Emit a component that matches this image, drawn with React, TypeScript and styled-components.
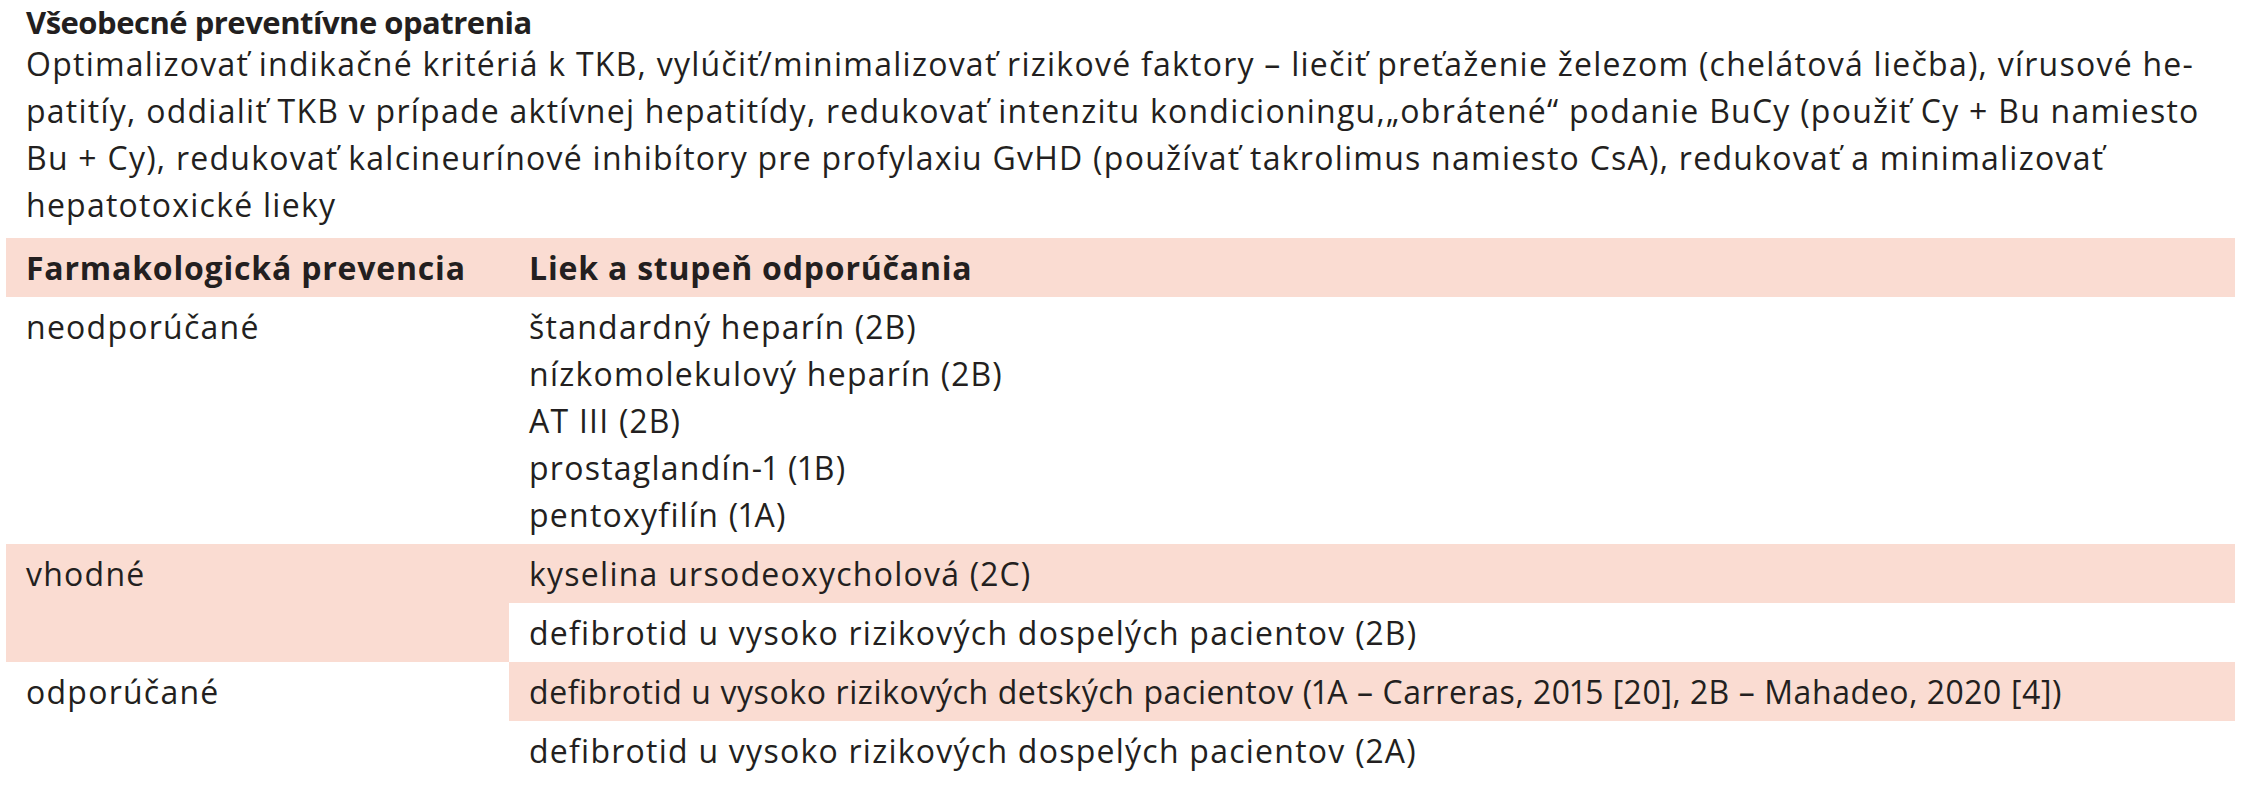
import React from "react";
import styled, { createGlobalStyle } from "styled-components";

const GlobalStyle = createGlobalStyle`
  html, body {
    margin: 0;
    padding: 0;
    background: #ffffff;
  }
  body {
    font-family: "Open Sans", "Noto Sans", "DejaVu Sans", sans-serif;
    color: #231f20;
  }
`;

const PINK = "#fadcd2";

const Page = styled.div`
  width: 2250px;
  height: 800px;
  box-sizing: border-box;
  padding: 4px 15px 0 6px;
  font-size: 32px;
  letter-spacing: 1.25px;
  font-variant-numeric: proportional-nums;
`;

const Intro = styled.section`
  padding: 0 20px 10px 20px;
`;

const Title = styled.h2`
  margin: 0;
  font-size: 31px;
  font-weight: 700;
  line-height: 36px;
  letter-spacing: -0.5px;
`;

const Paragraph = styled.p`
  margin: 0;
  font-size: 32px;
  font-weight: 400;
  line-height: 47px;
  white-space: nowrap;
`;

const Table = styled.div`
  display: grid;
  grid-template-columns: 503px 1fr;
`;

const Cell = styled.div<{ $pink?: boolean; $bold?: boolean; $span?: number; $tight?: boolean }>`
  box-sizing: border-box;
  padding: 6px 20px 6px 20px;
  line-height: 47px;
  background: ${(p) => (p.$pink ? PINK : "transparent")};
  font-weight: ${(p) => (p.$bold ? 700 : 400)};
  letter-spacing: ${(p) => (p.$bold ? "0.8px" : p.$tight ? "0.6px" : "1.25px")};
  white-space: nowrap;
  ${(p) => (p.$span ? `grid-row: span ${p.$span};` : "")}
`;

const Lines = styled.div`
  display: flex;
  flex-direction: column;
`;

const notRecommended = [
  "štandardný heparín (2B)",
  "nízkomolekulový heparín (2B)",
  "AT III (2B)",
  "prostaglandín-1 (1B)",
  "pentoxyfilín (1A)",
];

export default function App() {
  return (
    <>
      <GlobalStyle />
      <Page>
        <Intro>
          <Title>Všeobecné preventívne opatrenia</Title>
          <Paragraph>
            Optimalizovať indikačné kritériá k TKB, vylúčiť/minimalizovať rizikové faktory – liečiť preťaženie železom (chelátová liečba), vírusové he-
            <br />
            patitíy, oddialiť TKB v prípade aktívnej hepatitídy, redukovať intenzitu kondicioningu,„obrátené“ podanie BuCy (použiť Cy + Bu namiesto
            <br />
            Bu + Cy), redukovať kalcineurínové inhibítory pre profylaxiu GvHD (používať takrolimus namiesto CsA), redukovať a minimalizovať
            <br />
            hepatotoxické lieky
          </Paragraph>
        </Intro>
        <Table>
          <Cell $pink $bold>Farmakologická prevencia</Cell>
          <Cell $pink $bold>Liek a stupeň odporúčania</Cell>

          <Cell>neodporúčané</Cell>
          <Cell>
            <Lines>
              {notRecommended.map((t) => (
                <span key={t}>{t}</span>
              ))}
            </Lines>
          </Cell>

          <Cell $pink $span={2}>vhodné</Cell>
          <Cell $pink>kyselina ursodeoxycholová (2C)</Cell>
          <Cell>defibrotid u vysoko rizikových dospelých pacientov (2B)</Cell>

          <Cell $span={2}>odporúčané</Cell>
          <Cell $pink $tight>
            defibrotid u vysoko rizikových detských pacientov (1A – Carreras, 2015 [20], 2B – Mahadeo, 2020 [4])
          </Cell>
          <Cell>defibrotid u vysoko rizikových dospelých pacientov (2A)</Cell>
        </Table>
      </Page>
    </>
  );
}
